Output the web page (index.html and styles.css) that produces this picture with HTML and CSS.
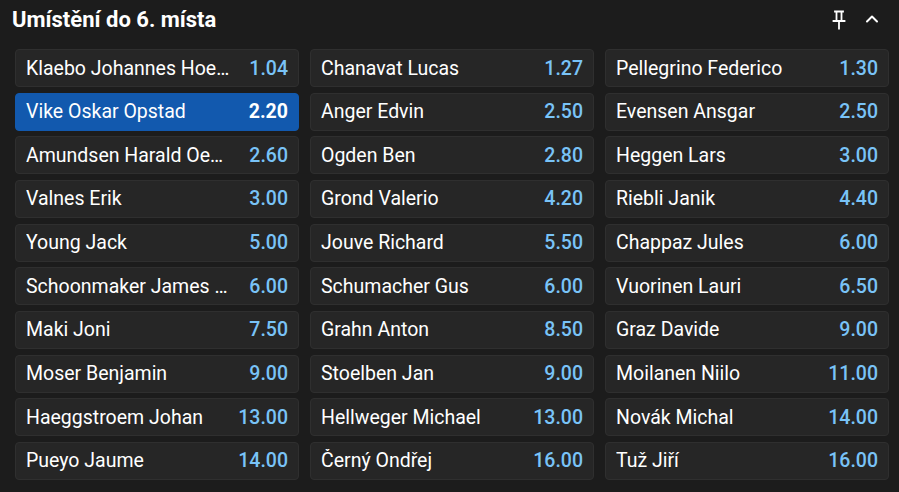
FILE: index.html
```html
<!DOCTYPE html>
<html lang="cs">
<head>
<meta charset="utf-8">
<title>Umístění do 6. místa</title>
<link rel="stylesheet" href="styles.css">
</head>
<body>
<section class="market">
  <header class="market-head">
    <h2 class="market-title">Umístění do 6. místa</h2>
    <div class="market-tools">
      <svg class="icon-pin" width="14" height="20" viewBox="0 0 14 20" aria-hidden="true">
        <path d="M3 1.5h8M4.5 1.5v9M9.5 1.5v9M1.5 11h11M7 11v7.5" fill="none" stroke="#fff" stroke-width="1.8" stroke-linecap="square"/>
      </svg>
      <svg class="icon-chevron" width="14" height="10" viewBox="0 0 14 10" aria-hidden="true">
        <path d="M2 7.5L7 2.5L12 7.5" fill="none" stroke="#fff" stroke-width="2" stroke-linecap="round" stroke-linejoin="round"/>
      </svg>
    </div>
  </header>
  <div class="grid">
    <div class="cell"><span class="name">Klaebo Johannes Hoesflot</span><span class="odd">1.04</span></div>
    <div class="cell"><span class="name">Chanavat Lucas</span><span class="odd">1.27</span></div>
    <div class="cell"><span class="name">Pellegrino Federico</span><span class="odd">1.30</span></div>

    <div class="cell selected"><span class="name">Vike Oskar Opstad</span><span class="odd">2.20</span></div>
    <div class="cell"><span class="name">Anger Edvin</span><span class="odd">2.50</span></div>
    <div class="cell"><span class="name">Evensen Ansgar</span><span class="odd">2.50</span></div>

    <div class="cell"><span class="name">Amundsen Harald Oestberg</span><span class="odd">2.60</span></div>
    <div class="cell"><span class="name">Ogden Ben</span><span class="odd">2.80</span></div>
    <div class="cell"><span class="name">Heggen Lars</span><span class="odd">3.00</span></div>

    <div class="cell"><span class="name">Valnes Erik</span><span class="odd">3.00</span></div>
    <div class="cell"><span class="name">Grond Valerio</span><span class="odd">4.20</span></div>
    <div class="cell"><span class="name">Riebli Janik</span><span class="odd">4.40</span></div>

    <div class="cell"><span class="name">Young Jack</span><span class="odd">5.00</span></div>
    <div class="cell"><span class="name">Jouve Richard</span><span class="odd">5.50</span></div>
    <div class="cell"><span class="name">Chappaz Jules</span><span class="odd">6.00</span></div>

    <div class="cell"><span class="name">Schoonmaker James Clinton</span><span class="odd">6.00</span></div>
    <div class="cell"><span class="name">Schumacher Gus</span><span class="odd">6.00</span></div>
    <div class="cell"><span class="name">Vuorinen Lauri</span><span class="odd">6.50</span></div>

    <div class="cell"><span class="name">Maki Joni</span><span class="odd">7.50</span></div>
    <div class="cell"><span class="name">Grahn Anton</span><span class="odd">8.50</span></div>
    <div class="cell"><span class="name">Graz Davide</span><span class="odd">9.00</span></div>

    <div class="cell"><span class="name">Moser Benjamin</span><span class="odd">9.00</span></div>
    <div class="cell"><span class="name">Stoelben Jan</span><span class="odd">9.00</span></div>
    <div class="cell"><span class="name">Moilanen Niilo</span><span class="odd">11.00</span></div>

    <div class="cell"><span class="name">Haeggstroem Johan</span><span class="odd">13.00</span></div>
    <div class="cell"><span class="name">Hellweger Michael</span><span class="odd">13.00</span></div>
    <div class="cell"><span class="name">Novák Michal</span><span class="odd">14.00</span></div>

    <div class="cell"><span class="name">Pueyo Jaume</span><span class="odd">14.00</span></div>
    <div class="cell"><span class="name">Černý Ondřej</span><span class="odd">16.00</span></div>
    <div class="cell"><span class="name">Tuž Jiří</span><span class="odd">16.00</span></div>
  </div>
</section>
</body>
</html>
```

FILE: styles.css
```css
html, body {
  margin: 0;
  padding: 0;
  background: #1c1c1c;
}
body {
  width: 899px;
  height: 492px;
  overflow: hidden;
  font-family: Roboto, "Noto Sans", sans-serif;
  color: #ffffff;
}
.market {
  padding: 0 10px 0 15px;
}
.market-head {
  display: flex;
  align-items: center;
  justify-content: space-between;
  height: 40px;
  margin-left: -3px;
}
.market-title {
  margin: 0;
  font-size: 22px;
  font-weight: 700;
  color: #ffffff;
  line-height: 1;
}
.market-tools {
  display: flex;
  align-items: center;
  gap: 19px;
  padding-right: 10px;
}
.icon-pin {
  display: block;
}
.icon-chevron {
  display: block;
  margin-top: -3px;
}
.grid {
  margin-top: 9px;
  display: grid;
  grid-template-columns: repeat(3, 284px);
  column-gap: 11px;
  row-gap: 5.67px;
}
.cell {
  box-sizing: border-box;
  height: 38px;
  display: flex;
  align-items: center;
  justify-content: space-between;
  gap: 17px;
  padding: 0 10px;
  background: #262626;
  border: 1px solid #2f2f2f;
  border-radius: 4px;
  font-size: 19.5px;
}
.name {
  flex: 1 1 auto;
  min-width: 0;
  white-space: nowrap;
  overflow: hidden;
  text-overflow: ellipsis;
  color: #ffffff;
}
.odd {
  flex: 0 0 auto;
  color: #79c3f7;
  font-weight: 500;
}
.cell.selected {
  background: #1259ae;
  border-color: #1259ae;
}
.cell.selected .odd {
  color: #ffffff;
  font-weight: 700;
}
```
